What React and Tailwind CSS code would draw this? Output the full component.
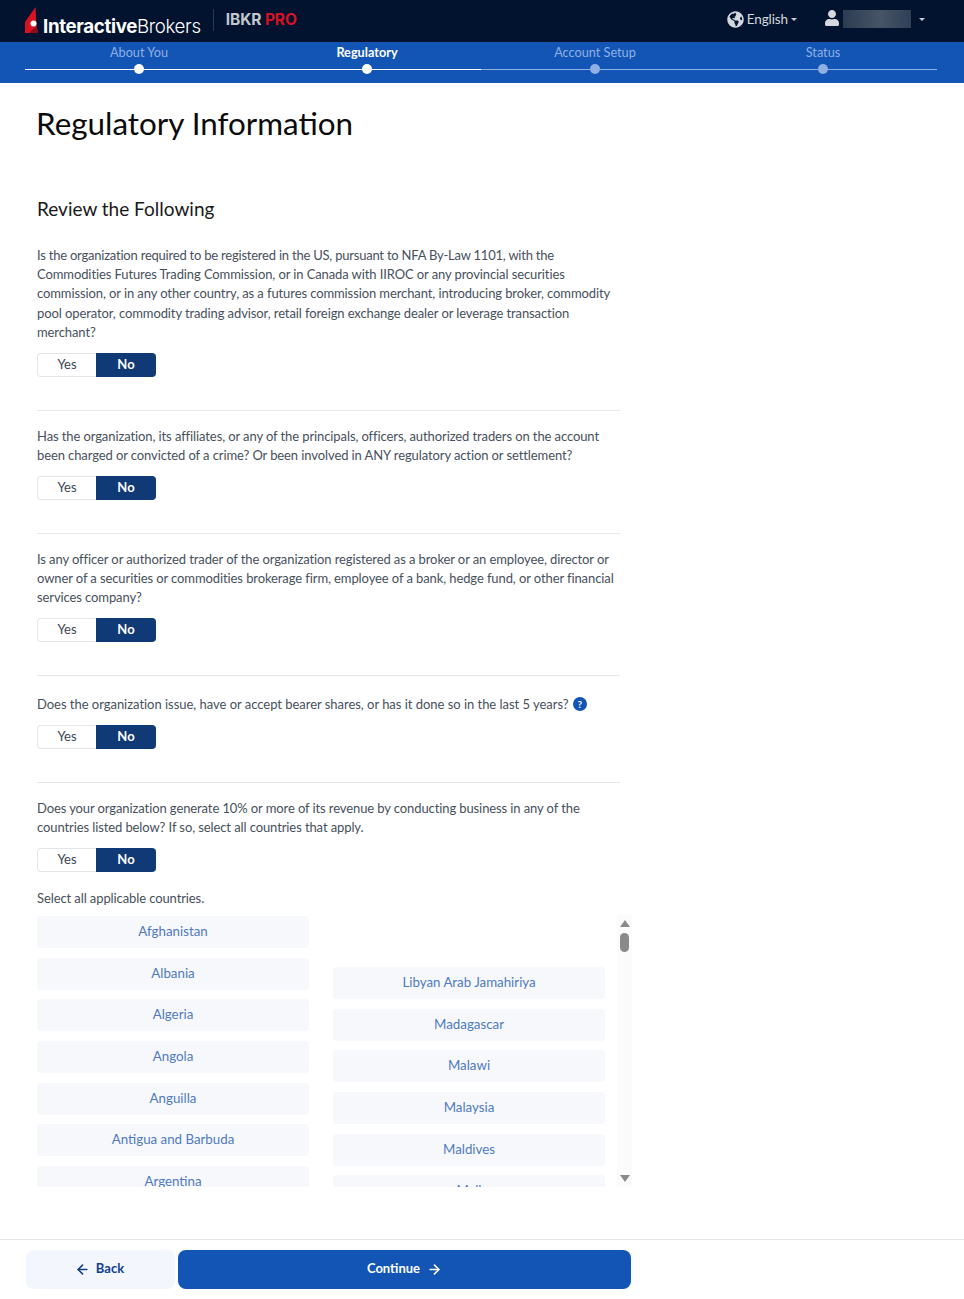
import { ArrowLeft, ArrowRight } from "lucide-react";
import { FaGlobeAmericas, FaUser } from "react-icons/fa";

const FONT = { fontFamily: "Lato, 'Open Sans', sans-serif" };

const steps = [
  { label: "About You", state: "done" },
  { label: "Regulatory", state: "active" },
  { label: "Account Setup", state: "todo" },
  { label: "Status", state: "todo" },
];

const leftCountries = ["Afghanistan", "Albania", "Algeria", "Angola", "Anguilla", "Antigua and Barbuda", "Argentina"];
const rightCountries = ["Libyan Arab Jamahiriya", "Madagascar", "Malawi", "Malaysia", "Maldives", "Mali"];

function Caret() {
  return <span className="inline-block w-0 h-0 border-x-[3px] border-x-transparent border-t-[3px] border-t-[#c9ced6]" />;
}

function Logo() {
  return (
    <div className="flex items-center mt-[12px]">
      <svg width="13" height="26" viewBox="0 0 13 26" className="mr-[5px] -translate-y-[7px]">
        <path d="M10.5 0 L0 15 L0 26 L13 26 L11.5 19 Z" fill="#d81222" />
        <path d="M11.5 19 L13 26 L4 26 Z" fill="#8f0d18" />
        <circle cx="8.5" cy="16.5" r="3" fill="#fff" />
      </svg>
      <span className="text-[18.7px] text-white font-['Inter',sans-serif] tracking-[-0.35px]">
        <span className="font-bold">Interactive</span>
        <span className="font-light">Brokers</span>
      </span>
    </div>
  );
}

function Header() {
  return (
    <div className="h-[42px] bg-[#01132f] flex items-center pl-[25px] pr-[39px]">
      <Logo />
      <div className="w-px h-[22px] bg-[#2a3a52] ml-[12px] mr-[12px] -mt-[3px]" />
      <div className="text-[15.5px] font-bold font-['Inter',sans-serif] -mt-[3px] tracking-[-0.1px]">
        <span className="text-[#c3c8d0]">IBKR </span>
        <span className="text-[#d81222]">PRO</span>
      </div>
      <div className="ml-auto flex items-center -mt-[3px]">
        <FaGlobeAmericas className="text-[#d5d9df] text-[17px] mr-[3px]" />
        <span className="text-[13.5px] text-[#d5d9df] mr-[3px] tracking-[-0.1px]">English</span>
        <Caret />
        <FaUser className="text-[#d5d9df] text-[16px] ml-[27px] mr-[3px] -mt-[3px]" />
        <div className="w-[68px] h-[18px] mr-[8px] bg-[linear-gradient(90deg,#2c3c52,#465466_55%,#2f3f55)] -mt-[1px]" />
        <Caret />
      </div>
    </div>
  );
}

function Stepper() {
  return (
    <div className="h-[41px] bg-[#1355b5] pl-[25px] pr-[27px] grid grid-cols-4">
      {steps.map((s, i) => {
        const reached = s.state !== "todo";
        return (
          <div key={s.label} className="flex flex-col items-center">
            <div
              className={`text-[12.7px] leading-[16px] mt-[2px] h-[18px] ${
                s.state === "active" ? "text-white font-bold" : "text-[#8fb0e2]"
              }`}
            >
              {s.label}
            </div>
            <div className="w-full flex items-center mt-[2px]">
              <div className={`flex-1 h-px ${reached ? "bg-white" : "bg-[#8fb0e2]"}`} />
              <div className={`w-[10px] h-[10px] rounded-full ${reached ? "bg-white" : "bg-[#8fb0e2]"}`} />
              <div className={`flex-1 h-px ${s.state === "done" || i === 1 ? "bg-white" : "bg-[#8fb0e2]"}`} />
            </div>
          </div>
        );
      })}
    </div>
  );
}

function YesNo() {
  return (
    <div className="flex w-[119px] h-[24px] text-[13px] mt-[11px]">
      <div className="w-[59px] flex items-center justify-center border border-r-0 border-[#e4e6ea] rounded-l text-[#3c4654]">Yes</div>
      <div className="w-[60px] flex items-center justify-center bg-[#0f3a75] text-white font-bold rounded-r">No</div>
    </div>
  );
}

function Question({ children, last }) {
  return (
    <div className={last ? "" : "border-b border-[#e4e6ea] pb-[33px] mb-[15.6px]"}>
      <p className="text-[13px] leading-[19.2px] tracking-[-0.1px] text-[#47505c]">{children}</p>
      <YesNo />
    </div>
  );
}

function CountryButton({ name }) {
  return (
    <div className="h-[32px] shrink-0 rounded bg-[#f7f8fc] flex items-center justify-center text-[13.3px] text-[#4f7ac0]">
      {name}
    </div>
  );
}

function CountryList() {
  return (
    <div className="flex w-[595px] h-[272px]">
      <div className="w-[581px] overflow-hidden grid grid-cols-2 gap-x-[24px] pr-[12px] pt-[1px]">
        <div className="flex flex-col gap-[9.6px]">
          {leftCountries.map((c) => (
            <CountryButton key={c} name={c} />
          ))}
        </div>
        <div className="flex flex-col gap-[9.6px] pt-[51px]">
          {rightCountries.map((c) => (
            <CountryButton key={c} name={c} />
          ))}
        </div>
      </div>
      <div className="w-[15px] bg-[#fbfbfc] flex flex-col items-center py-[5px]">
        <svg width="10" height="7" viewBox="0 0 10 7"><path d="M5 0 L10 7 L0 7 Z" fill="#8a8a8a" /></svg>
        <div className="w-[9px] h-[19px] rounded-full bg-[#8a8a8a] mt-[6px]" />
        <svg width="10" height="7" viewBox="0 0 10 7" className="mt-auto"><path d="M5 7 L10 0 L0 0 Z" fill="#8a8a8a" /></svg>
      </div>
    </div>
  );
}

export default function App() {
  return (
    <div className="w-[964px] h-[1299px] bg-white flex flex-col overflow-hidden" style={FONT}>
      <Header />
      <Stepper />
      <div className="flex-1 pl-[37px]">
        <h1 className="text-[31.4px] leading-[40px] text-[#0b0b0b] mt-[20px] -ml-[1px]">Regulatory Information</h1>
        <h2 className="text-[19px] leading-[24px] text-[#1a1a1a] mt-[54px] mb-[25px]">Review the Following</h2>
        <div className="w-[583px]">
          <Question>
            <span className="tracking-[-0.22px]">
              Is the organization required to be registered in the US, pursuant to NFA By-Law 1101, with the
            </span>
            <br />
            Commodities Futures Trading Commission, or in Canada with IIROC or any provincial securities
            <br />
            commission, or in any other country, as a futures commission merchant, introducing broker, commodity
            <br />
            pool operator, commodity trading advisor, retail foreign exchange dealer or leverage transaction
            <br />
            merchant?
          </Question>
          <Question>
            Has the organization, its affiliates, or any of the principals, officers, authorized traders on the account
            <br />
            been charged or convicted of a crime? Or been involved in ANY regulatory action or settlement?
          </Question>
          <Question>
            Is any officer or authorized trader of the organization registered as a broker or an employee, director or
            <br />
            owner of a securities or commodities brokerage firm, employee of a bank, hedge fund, or other financial
            <br />
            services company?
          </Question>
          <div className="pt-[3px]">
            <Question>
              <span className="tracking-[-0.03px]">
                Does the organization issue, have or accept bearer shares, or has it done so in the last 5 years?
              </span>{" "}
              <span className="inline-flex w-[14px] h-[14px] rounded-full bg-[#1355b5] text-white text-[10px] font-bold items-center justify-center align-[1px] ml-[1px]">
                ?
              </span>
            </Question>
          </div>
          <Question last>
            Does your organization generate 10% or more of its revenue by conducting business in any of the
            <br />
            countries listed below? If so, select all countries that apply.
          </Question>
        </div>
        <p className="text-[13px] leading-[19.2px] tracking-[-0.1px] text-[#47505c] mt-[17px] mb-[7px]">Select all applicable countries.</p>
        <CountryList />
      </div>
      <div className="h-[60px] border-t border-[#e4e6ea] pl-[26px] pt-[10px] flex gap-[3px]">
        <div className="w-[149px] h-[39px] pb-[1px] pr-[2px] rounded-lg bg-[#f3f6fd] flex items-center justify-center gap-[6px] text-[13px] font-bold text-[#0f3f8c]">
          <ArrowLeft size={15} strokeWidth={2.5} />
          <span>Back</span>
        </div>
        <div className="w-[453px] h-[39px] pb-[1px] rounded-lg bg-[#1355b5] flex items-center justify-center gap-[7px] text-[13px] font-bold text-white">
          <span>Continue</span>
          <ArrowRight size={15} strokeWidth={2.5} />
        </div>
      </div>
    </div>
  );
}
